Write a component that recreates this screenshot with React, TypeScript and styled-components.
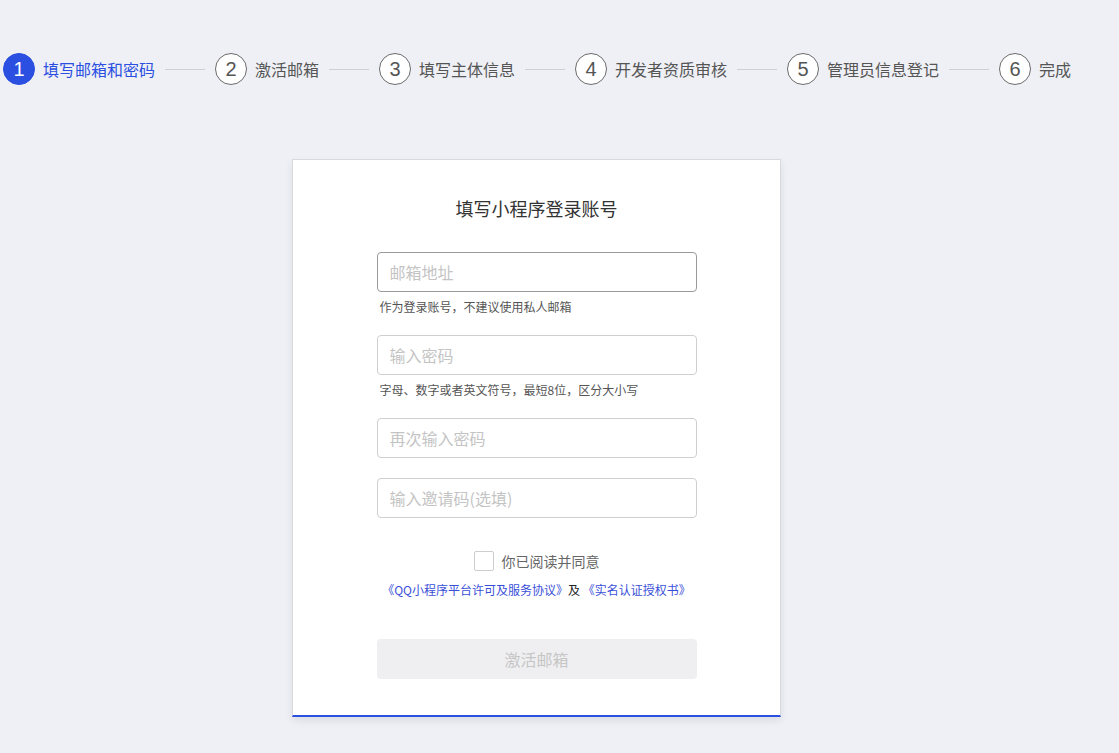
import * as React from 'react';
import styled, { createGlobalStyle } from 'styled-components';

const GlobalStyle = createGlobalStyle`
  html, body {
    margin: 0;
    padding: 0;
    background: #eff0f5;
    font-family: "Microsoft YaHei", "Noto Sans CJK SC", "Liberation Sans", sans-serif;
  }
`;

const steps = [
  '填写邮箱和密码',
  '激活邮箱',
  '填写主体信息',
  '开发者资质审核',
  '管理员信息登记',
  '完成',
];

const Page = styled.div`
  min-height: 753px;
  box-sizing: border-box;
  padding-top: 53px;
`;

const StepBar = styled.ol`
  display: flex;
  align-items: center;
  list-style: none;
  margin: 0;
  padding: 0 0 0 3px;
  height: 32px;
`;

const Step = styled.li`
  display: flex;
  align-items: center;
`;

const Circle = styled.span<{ active: boolean }>`
  box-sizing: border-box;
  width: 32px;
  height: 32px;
  border-radius: 50%;
  display: flex;
  align-items: center;
  justify-content: center;
  font-size: 20px;
  font-family: "Liberation Sans", "Noto Sans CJK SC", sans-serif;
  border: 1px solid ${({ active }) => (active ? '#2b4fe0' : '#6b6b6b')};
  background: ${({ active }) => (active ? '#2b4fe0' : '#fff')};
  color: ${({ active }) => (active ? '#fff' : '#555')};
`;

const StepLabel = styled.span<{ active: boolean }>`
  margin-left: 8px;
  font-size: 16px;
  line-height: 32px;
  color: ${({ active }) => (active ? '#2b4fe0' : '#555')};
`;

const Connector = styled.span`
  width: 40px;
  height: 1px;
  background: #cfd0d4;
  margin: 0 10px;
`;

const Card = styled.section`
  box-sizing: border-box;
  width: 489px;
  margin: 74px 0 0 292px;
  background: #fff;
  border: 1px solid #d8d9dc;
  border-bottom: 2px solid #2b4fe0;
  box-shadow: 0 4px 8px rgba(0, 0, 0, 0.08);
  padding: 36px 0 36px;
  display: flex;
  flex-direction: column;
  align-items: center;
`;

const Title = styled.h2`
  margin: 0;
  font-size: 18px;
  font-weight: normal;
  color: #333;
  line-height: 24px;
`;

const Form = styled.div`
  width: 320px;
  margin-top: 32px;
  display: flex;
  flex-direction: column;
`;

const Field = styled.div<{ gap: number }>`
  margin-bottom: ${({ gap }) => gap}px;
`;

const Input = styled.input<{ strong?: boolean }>`
  box-sizing: border-box;
  width: 320px;
  height: 40px;
  padding: 0 12px;
  border: 1px solid ${({ strong }) => (strong ? '#9a9a9a' : '#cfcfcf')};
  border-radius: 4px;
  font-size: 16px;
  font-family: inherit;
  outline: none;
  color: #333;
  &::placeholder {
    color: #c4c4c4;
  }
`;

const Hint = styled.p`
  margin: 7px 0 0 3px;
  font-size: 12px;
  line-height: 16px;
  color: #555;
`;

const Agree = styled.label`
  display: flex;
  align-items: center;
  justify-content: center;
  gap: 8px;
  margin-top: 33px;
  height: 20px;
  font-size: 14px;
  color: #666;
`;

const Box = styled.input`
  appearance: none;
  margin: 0;
  width: 20px;
  height: 20px;
  border: 1px solid #cdcdcd;
  border-radius: 2px;
  background: #fff;
`;

const Links = styled.p`
  margin: 10px 0 0;
  text-align: center;
  font-size: 12px;
  line-height: 18px;
  color: #222;
`;

const Link = styled.a`
  color: #3a4fd8;
  text-decoration: none;
`;

const Submit = styled.button`
  margin-top: 40px;
  width: 320px;
  height: 40px;
  border: none;
  border-radius: 4px;
  background: #efeff1;
  color: #c6c6c6;
  font-size: 16px;
  font-family: inherit;
`;

export default function App() {
  return (
    <Page>
      <GlobalStyle />
      <StepBar>
        {steps.map((s, i) => (
          <React.Fragment key={s}>
            <Step>
              <Circle active={i === 0}>{i + 1}</Circle>
              <StepLabel active={i === 0}>{s}</StepLabel>
            </Step>
            {i < steps.length - 1 && <Connector />}
          </React.Fragment>
        ))}
      </StepBar>
      <Card>
        <Title>填写小程序登录账号</Title>
        <Form>
          <Field gap={20}>
            <Input strong placeholder="邮箱地址" />
            <Hint>作为登录账号，不建议使用私人邮箱</Hint>
          </Field>
          <Field gap={20}>
            <Input type="password" placeholder="输入密码" />
            <Hint>字母、数字或者英文符号，最短8位，区分大小写</Hint>
          </Field>
          <Field gap={20}>
            <Input type="password" placeholder="再次输入密码" />
          </Field>
          <Field gap={0}>
            <Input placeholder="输入邀请码(选填)" />
          </Field>
          <Agree>
            <Box type="checkbox" />
            你已阅读并同意
          </Agree>
          <Links>
            <Link href="#">《QQ小程序平台许可及服务协议》</Link>及{' '}
            <Link href="#">《实名认证授权书》</Link>
          </Links>
          <Submit disabled>激活邮箱</Submit>
        </Form>
      </Card>
    </Page>
  );
}
